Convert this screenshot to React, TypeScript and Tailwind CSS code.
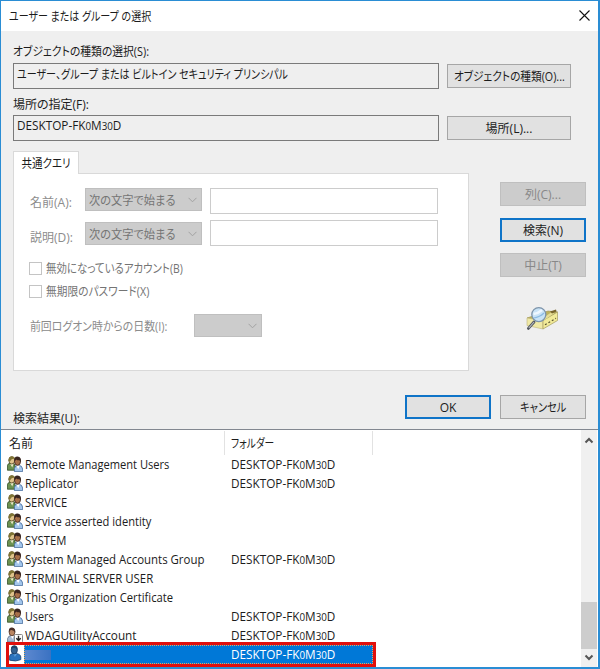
import React from 'react';
import clsx from 'clsx';

type Principal = {
  name: string;
  fit: string;
  local?: boolean;
};

const principals: Principal[] = [
  { name: 'Remote Management Users', fit: 'scale-x-[0.927]', local: true },
  { name: 'Replicator', fit: 'scale-x-[0.945]', local: true },
  { name: 'SERVICE', fit: 'scale-x-[0.93]' },
  { name: 'Service asserted identity', fit: 'scale-x-[0.928]' },
  { name: 'SYSTEM', fit: 'scale-x-[0.94]' },
  { name: 'System Managed Accounts Group', fit: 'scale-x-[0.952]', local: true },
  { name: 'TERMINAL SERVER USER', fit: 'scale-x-[0.948]' },
  { name: 'This Organization Certificate', fit: 'scale-x-[0.938]' },
  { name: 'Users', fit: 'scale-x-[0.9]', local: true },
];

function HostName() {
  return (
    <span className="inline-block origin-left scale-x-[0.98] whitespace-nowrap">
      DESKTOP-FK<span className="text-[10px]">0</span>M<span className="text-[10px]">30</span>D
    </span>
  );
}

type LabelProps = {
  children: React.ReactNode;
  className?: string;
  center?: boolean;
};

function Label({ children, className, center }: LabelProps) {
  return (
    <span
      className={clsx(
        'inline-block translate-y-px whitespace-nowrap [font-feature-settings:"palt"]',
        center ? 'origin-center' : 'origin-left',
        className
      )}
    >
      {children}
    </span>
  );
}

type ButtonProps = {
  children: React.ReactNode;
  className?: string;
  fit?: string;
  variant?: 'normal' | 'primary' | 'disabled';
};

function DialogButton({ children, className, fit, variant = 'normal' }: ButtonProps) {
  return (
    <button
      disabled={variant === 'disabled'}
      className={clsx(
        'flex h-6 shrink-0 items-center justify-center',
        variant === 'normal' && 'border border-[#a6a6a6] bg-[#e1e1e1]',
        variant === 'primary' && 'border-2 border-[#0f74c8] bg-[#e1e1e1]',
        variant === 'disabled' && 'border border-[#bfbfbf] bg-[#cccccc] text-[#888888]',
        className
      )}
    >
      <Label center className={fit}>{children}</Label>
    </button>
  );
}

function Chevron({ className }: { className?: string }) {
  return (
    <svg className={className} width="9" height="6" viewBox="0 0 9 6" fill="none" stroke="currentColor">
      <path d="M0.5 0.8L4.5 4.8L8.5 0.8" />
    </svg>
  );
}

function SelectBox({ children, className }: { children?: React.ReactNode; className?: string }) {
  return (
    <div
      className={clsx(
        'flex h-[23px] shrink-0 items-center justify-between border border-[#bfbfbf] bg-[#cccccc] pr-1 pl-[3px] text-[#747474]',
        className
      )}
    >
      <span>{children}</span>
      <Chevron className="text-[#a2a2a2]" />
    </div>
  );
}

function CheckRow({ children }: { children: React.ReactNode }) {
  return (
    <div className="flex h-[23px] items-center gap-1 text-[#747474]">
      <span className="size-[13px] border border-[#c4c4c4] bg-white" />
      <div className="-mt-px">{children}</div>
    </div>
  );
}

function GroupIcon() {
  return (
    <svg className="shrink-0 -translate-y-px" width="16" height="16" viewBox="0 0 16 16">
      <path d="M0.4 14.2V9.5Q0.8 7.2 4 7Q8 7 8.2 10V14.2Z" fill="#6c9150" stroke="#2f4a26" strokeWidth="0.8" />
      <path d="M3 7.2L5.2 11.4L6.8 7.2Z" fill="#f3efcf" />
      <ellipse cx="4.8" cy="4.3" rx="3" ry="3.7" fill="#dfc48c" stroke="#4f431f" strokeWidth="0.8" />
      <path d="M1.6 5Q1.2 0.5 5 0.4Q7.9 0.5 7.7 3Q4.4 1.8 3.2 5.2Z" fill="#7f7434" />
      <path d="M7.4 15.6V12.5Q8 9.4 11.4 9.2Q15.3 9.5 15.6 13V15.6Z" fill="#a3c6ec" stroke="#41689a" strokeWidth="0.8" />
      <path d="M9.2 9.2L11.2 13.2L12.7 9.5Z" fill="#ffffff" />
      <ellipse cx="10.5" cy="5.4" rx="3" ry="3.9" fill="#a8714a" stroke="#38201a" strokeWidth="0.8" />
      <path d="M7.5 5.6Q6.6 0.7 10.5 0.6Q14.8 0.8 13.8 6.8L12.6 4.2Q10.4 4.6 9.2 3.4Z" fill="#37241f" />
    </svg>
  );
}

function DisabledUserIcon() {
  return (
    <svg className="shrink-0 -translate-y-px" width="16" height="16" viewBox="0 0 16 16">
      <path d="M0.6 15V11.4Q1.5 8.2 5.4 8.2Q9.6 8.6 10 12V15Z" fill="#a9bdd6" stroke="#4f5f75" strokeWidth="0.7" />
      <path d="M3.6 8.5L5.4 12L7 8.6Z" fill="#ffffff" />
      <ellipse cx="5" cy="5" rx="2.9" ry="3.8" fill="#b98561" stroke="#41251a" strokeWidth="0.7" />
      <path d="M1.9 5Q1.4 0.6 5 0.6Q8.8 0.8 8.2 5.8Q6.4 2.7 3.8 3.1Z" fill="#4a3029" />
      <rect x="7.5" y="7.5" width="8" height="8" rx="1" fill="#ffffff" stroke="#888888" />
      <path d="M11.5 8.8V13.4M9.3 11.2L11.5 13.5L13.7 11.2" fill="none" stroke="#222222" strokeWidth="1.4" />
    </svg>
  );
}

function SelectedUserIcon() {
  return (
    <svg className="shrink-0" width="14" height="17" viewBox="0 0 14 17">
      <path d="M0.6 15.2V11Q1 8.8 4.2 8.5H7.4Q11.6 9.2 11.8 12V14.6Q7 17 0.6 15.2Z" fill="#2a73bd" stroke="#173f70" strokeWidth="0.8" />
      <path d="M4.3 8.5L5.9 12L7.8 9Z" fill="#5c9fdc" />
      <ellipse cx="5.3" cy="4.9" rx="3.1" ry="4" fill="#33618f" stroke="#15375f" strokeWidth="0.8" />
      <path d="M2.1 4.6Q1.7 0.6 5.3 0.6Q9.1 0.8 8.3 5Q6.5 2.5 3.9 2.9Z" fill="#1f4266" />
    </svg>
  );
}

function SearchIcon() {
  return (
    <svg width="34" height="26" viewBox="0 0 34 26">
      <path d="M1 12L22 5L31.5 6L17 15Z" fill="#bdb25e" stroke="#9c9250" strokeWidth="0.6" />
      <path d="M1 12L17 14.5V23L1 19.5Z" fill="#efe9a6" stroke="#bdb478" strokeWidth="0.6" />
      <path d="M17 14.5L31.5 6V14.5L17 23Z" fill="#f1ea98" stroke="#a39b5e" strokeWidth="0.7" />
      <path d="M15 13.5L25 6.5L28.5 7L18.5 14Z" fill="#e6dd94" />
      <path d="M24 5.6L30 3.6L30.6 5.4L26 7.4Z" fill="#77642c" />
      <path d="M19 18.8L30 12.2" stroke="#5b5534" strokeWidth="1.2" strokeDasharray="2 2" />
      <path d="M8 16L2.4 22.4" stroke="#53585f" strokeWidth="2.8" strokeLinecap="round" />
      <path d="M8 16L2.8 22" stroke="#b9bec5" strokeWidth="1.1" />
      <circle cx="12.8" cy="8.6" r="7" fill="#c9e3f6" stroke="#7d94aa" strokeWidth="1.3" />
      <path d="M7.5 8Q12 7.5 16 4" fill="none" stroke="#eef7ff" strokeWidth="2.4" />
      <path d="M7.5 12Q14 11 18 7" fill="none" stroke="#8dbbe2" strokeWidth="1.2" />
    </svg>
  );
}

function ScrollArrow({ up }: { up?: boolean }) {
  return (
    <svg className={clsx('shrink-0', up && 'mt-[2px] rotate-180')} width="16" height="17" viewBox="0 0 16 17" fill="none">
      <path d="M4.5 6.5L8 10L11.5 6.5" stroke="#555555" strokeWidth="2" />
    </svg>
  );
}

export default function App() {
  return (
    <div className="flex h-[669px] w-[600px] flex-col overflow-hidden border-t border-r-2 border-b-2 border-l border-[#2a8dd4] bg-[#efefef] font-['Open_Sans','Noto_Sans_CJK_JP',sans-serif] text-[12px] leading-4 text-[#1c1c1c]">
      <header className="flex h-[30px] shrink-0 items-center justify-between bg-white pr-2 pl-2">
        <Label className="scale-x-[0.835]">ユーザー または グループ の選択</Label>
        <svg className="-translate-y-px" width="11" height="11" viewBox="0 0 11 11" stroke="#111111" strokeWidth="1.1">
          <path d="M0.5 0.5L10.5 10.5M10.5 0.5L0.5 10.5" />
        </svg>
      </header>

      <section className="h-[120px] shrink-0 pt-3 pl-3">
        <div className="h-5"><Label className="scale-x-[0.9]">オブジェクトの種類の選択(S):</Label></div>
        <div className="flex h-[26px] items-center gap-2">
          <div className="h-[26px] w-[426px] border border-[#7a7a7a] px-[3px] pt-[2px]">
            <Label className="scale-x-[0.838]">ユーザー、グループ または ビルトイン セキュリティ プリンシパル</Label>
          </div>
          <DialogButton className="w-[124px]" fit="scale-x-[0.89]">オブジェクトの種類(O)...</DialogButton>
        </div>
        <div className="h-[26px] pt-[7px]"><Label>場所の指定(F):</Label></div>
        <div className="flex h-[26px] items-center gap-2">
          <div className="h-[26px] w-[426px] border border-[#7a7a7a] px-[3px] pt-[2px]"><HostName /></div>
          <DialogButton className="w-[124px]">場所(L)...</DialogButton>
        </div>
      </section>

      <div className="flex h-[220px] shrink-0 pl-3">
        <div className="w-[456px]">
          <div className="relative z-10 flex h-[23px] w-[66px] items-center justify-center border border-b-0 border-[#d9d9d9] bg-white">
            <Label center className="scale-x-[0.875]">共通クエリ</Label>
          </div>
          <div className="-mt-px h-[198px] border border-[#d9d9d9] bg-white pt-[14px] pl-[15px]">
            <div className="flex h-[26px] items-start">
              <Label className="w-[56px] pt-[6px] pl-px text-[#8c8c8c]">名前(A):</Label>
              <SelectBox className="w-[117px]"><Label className="scale-x-[0.935]">次の文字で始まる</Label></SelectBox>
              <input disabled className="ml-2 h-[26px] w-[228px] border border-[#cccccc] bg-white" />
            </div>
            <div className="mt-[6px] flex h-[26px] items-start">
              <Label className="w-[56px] pt-[9px] pl-px text-[#8c8c8c]">説明(D):</Label>
              <SelectBox className="mt-[2px] w-[117px]"><Label className="scale-x-[0.935]">次の文字で始まる</Label></SelectBox>
              <input disabled className="ml-2 h-[26px] w-[228px] border border-[#cccccc] bg-white" />
            </div>
            <div className="mt-[11px]">
              <CheckRow><Label className="scale-x-[0.87]">無効になっているアカウント(B)</Label></CheckRow>
              <CheckRow><Label className="scale-x-[0.893]">無期限のパスワード(X)</Label></CheckRow>
            </div>
            <div className="mt-[11px] flex items-center">
              <Label className="w-[165px] scale-x-[0.908] pl-px text-[#8c8c8c]">前回ログオン時からの日数(I):</Label>
              <SelectBox className="w-[68px]" />
            </div>
          </div>
        </div>
        <div className="ml-[31px] flex w-[86px] flex-col items-center pt-[31px]">
          <DialogButton variant="disabled" className="w-full">列(C)...</DialogButton>
          <DialogButton variant="primary" className="mt-3 w-full">検索(N)</DialogButton>
          <DialogButton variant="disabled" className="mt-[11px] w-full">中止(T)</DialogButton>
          <div className="mt-[29px]"><SearchIcon /></div>
        </div>
      </div>

      <div className="flex h-[58px] shrink-0 justify-between pr-3 pl-3">
        <Label className="pt-[39px]">検索結果(U):</Label>
        <div className="flex gap-[9px] pt-6">
          <DialogButton variant="primary" className="w-[86px]">OK</DialogButton>
          <DialogButton className="w-[86px]" fit="scale-x-[0.85]">キャンセル</DialogButton>
        </div>
      </div>

      <div className="flex min-h-0 flex-1 border-t border-[#828790] bg-white">
        <div className="w-[580px]">
          <div className="mt-px flex h-6">
            <div className="w-[224px] border-r border-[#e2e2e2] pt-1 pl-2"><Label>名前</Label></div>
            <div className="w-[148px] border-r border-[#e2e2e2] pt-1 pl-[6px]"><Label className="scale-x-[0.81]">フォルダー</Label></div>
          </div>
          {principals.map((principal) => (
            <div key={principal.name} className="flex h-[19px] items-center pl-[6px]">
              <GroupIcon />
              <div className="w-[208px] pl-[2px]">
                <span className={clsx('inline-block origin-left whitespace-nowrap', principal.fit)}>{principal.name}</span>
              </div>
              {principal.local && <HostName />}
            </div>
          ))}
          <div className="flex h-[19px] items-center pl-[6px]">
            <DisabledUserIcon />
            <div className="w-[208px] pl-[2px]">
              <span className="inline-block origin-left scale-x-[0.98] whitespace-nowrap">WDAGUtilityAccount</span>
            </div>
            <HostName />
          </div>
          <div className="relative -mt-[3px] ml-[5px] flex h-[25px] w-[370px] border-[3px] border-[#e0100c] bg-white">
            <SelectedUserIcon />
            <div className="ml-px flex w-[349px] items-center border border-dotted border-[#e8a45c] bg-[#0078d7] text-white">
              <div className="h-[10px] w-[26px] bg-linear-to-r from-[#5c88cf] to-[#3a72c2]" />
              <span className="ml-[180px]"><HostName /></span>
            </div>
          </div>
        </div>
        <div className="flex w-4 flex-col bg-[#f0f0f0] pb-px">
          <ScrollArrow up />
          <div className="flex-1" />
          <div className="h-[47px] bg-[#cdcdcd]" />
          <ScrollArrow />
        </div>
      </div>
    </div>
  );
}
